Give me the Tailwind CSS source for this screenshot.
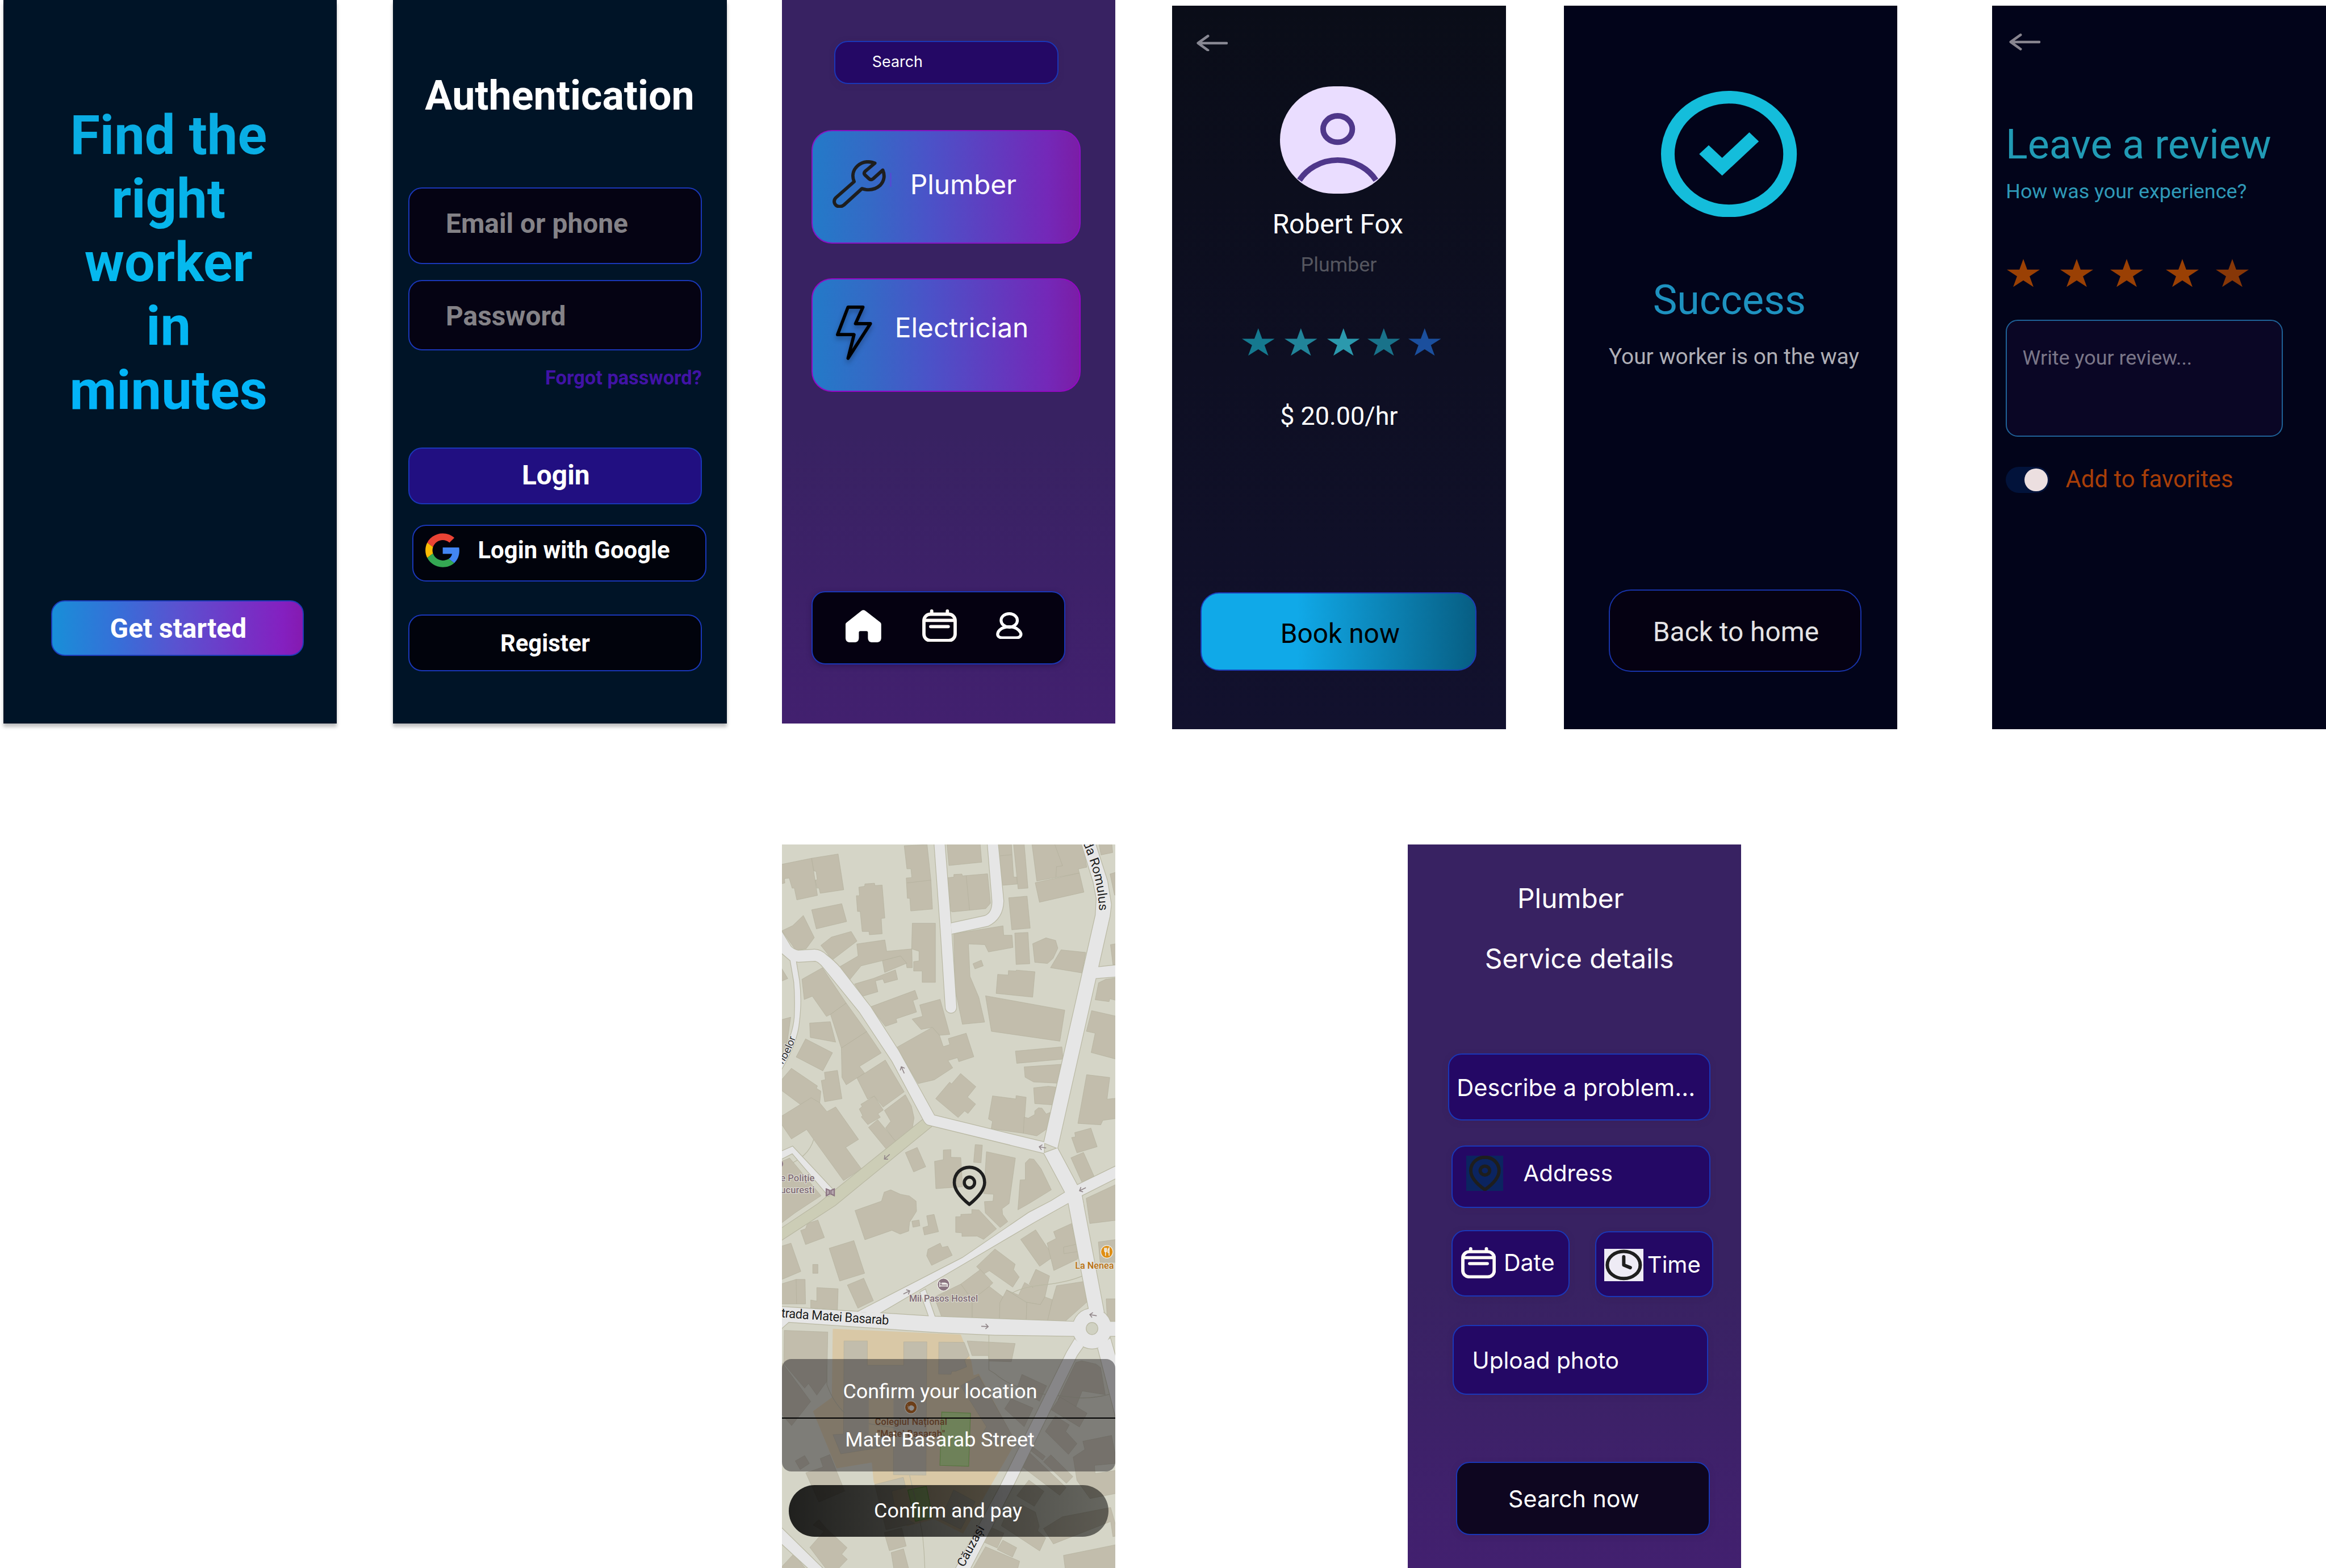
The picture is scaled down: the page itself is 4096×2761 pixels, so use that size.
<!DOCTYPE html>
<html lang="en">
<head>
<meta charset="utf-8">
<title>Find the right worker</title>
<script src="https://cdn.jsdelivr.net/npm/@tailwindcss/browser@4"></script>
</head>
<body class="bg-white overflow-hidden">
<svg class="hidden">
  <symbol id="star" viewBox="-95.1 -100 190.2 180.9" preserveAspectRatio="none"><polygon fill="currentColor" points="0,-100 22.5,-30.9 95.1,-30.9 36.3,11.8 58.8,80.9 0,38.2 -58.8,80.9 -36.3,11.8 -95.1,-30.9 -22.5,-30.9"/></symbol>
  <symbol id="back" viewBox="0 0 37 20"><path d="M35.5 10H2M13.5 1.6L1.8 10l11.7 8.4" fill="none" stroke="currentColor" stroke-width="3" stroke-linecap="round" stroke-linejoin="round"/></symbol>
  <symbol id="calendar" viewBox="637 106 245 232" preserveAspectRatio="none"><g fill="none" stroke="currentColor" stroke-width="23.5" stroke-linecap="round"><rect x="649" y="140" width="221" height="187" rx="46"/><path stroke-linecap="butt" d="M649 184H870"/><path d="M697 228H821M704 118V134M815 118V134"/></g></symbol>
</svg>

<div class="[zoom:1.49489] w-[2740px] h-[1847px] overflow-hidden font-['Roboto',sans-serif] text-white leading-none whitespace-nowrap">
<main class="flex items-start pl-[4px] h-[859px]">

  <!-- Welcome -->
  <section class="w-[393px] h-[852px] shrink-0 flex flex-col items-start bg-[#001427] shadow-[0_4px_4px_rgba(0,0,0,0.25)]">
    <h1 class="mt-[121.8px] ml-[74.500px] w-[240px] text-center whitespace-normal font-bold text-[64px] leading-[75px] bg-linear-to-b/srgb from-[#0aabe2] via-[#05b9ee] to-[#02b3fa] bg-clip-text text-transparent">Find the right worker in minutes</h1>
    <button class="mt-[210.2px] ml-[56px] w-[298px] h-[65.5px] flex items-start pl-[68.2px] pt-[16.9px] rounded-[16px] border-[1.34px] border-[#1d3bb8] bg-[linear-gradient(90deg,#188fd8,#366fd8_26%,#5a52d0_50%,#8420c0_92%,#851ab0)] font-bold text-[32px] leading-none">Get started</button>
  </section>

  <!-- Authentication -->
  <section class="ml-[66px] w-[393px] h-[852px] shrink-0 flex flex-col items-start bg-[#001427] font-bold shadow-[0_4px_4px_rgba(0,0,0,0.25)]">
    <h1 class="mt-[88.8px] ml-[37.6px] text-[48px] leading-none">Authentication</h1>
    <div class="mt-[84.2px] ml-[18px] w-[346px] h-[90px] pl-[42.8px] pt-[25.6px] rounded-[16px] border-[1.34px] border-[#1a37b8] bg-[#050313] text-[32px] leading-none text-[#848287]">Email or phone</div>
    <div class="mt-[19px] ml-[18px] w-[346px] h-[82.5px] pl-[42.8px] pt-[25.800px] rounded-[16px] border-[1.34px] border-[#1a37b8] bg-[#050313] text-[32px] leading-none text-[#848287]">Password</div>
    <a class="mt-[21px] ml-[179.2px] text-[23px] leading-none text-[#4113a6]">Forgot password?</a>
    <button class="mt-[70.4px] ml-[18px] w-[346px] h-[67px] flex items-start pl-[132.4px] pt-[16.500px] rounded-[16px] border-[1.34px] border-[#1a37b8] bg-[#210f81] text-[32px] leading-none">Login</button>
    <button class="mt-[24px] ml-[23px] w-[346px] h-[67px] flex items-start rounded-[16px] border-[1.34px] border-[#1a37b8] bg-[#01030c] text-[28px] leading-none">
      <svg class="mt-[9px] ml-[13.4px] w-[41px] h-[40px]" viewBox="2 2 44 44" preserveAspectRatio="none"><g transform="translate(2.1 2.1) scale(.913)"><path fill="#EA4335" d="M24 9.5c3.54 0 6.71 1.22 9.21 3.6l6.85-6.85C35.9 2.38 30.47 0 24 0 14.62 0 6.51 5.38 2.56 13.22l7.98 6.19C12.43 13.72 17.74 9.5 24 9.5z"/><path fill="#4285F4" d="M46.98 24.55c0-1.57-.15-3.09-.38-4.55H24v9.02h12.94c-.58 2.96-2.26 5.48-4.78 7.18l7.73 6c4.51-4.18 7.09-10.36 7.09-17.65z"/><path fill="#FBBC05" d="M10.53 28.59c-.48-1.45-.76-2.99-.76-4.59s.27-3.14.76-4.59l-7.98-6.19C.92 16.46 0 20.12 0 24c0 3.88.92 7.54 2.56 10.78l7.97-6.19z"/><path fill="#34A853" d="M24 48c6.48 0 11.93-2.13 15.89-5.81l-7.73-6c-2.15 1.45-4.92 2.3-8.16 2.3-6.26 0-11.57-4.22-13.47-9.91l-7.98 6.19C6.51 42.62 14.62 48 24 48z"/></g></svg>
      <span class="mt-[15.1px] ml-[21.2px]">Login with Google</span>
    </button>
    <button class="mt-[39px] ml-[18px] w-[346px] h-[67px] flex items-start pl-[107px] pt-[18.9px] rounded-[16px] border-[1.34px] border-[#1a37b8] bg-[#01030c] text-[28px] leading-none">Register</button>
  </section>

  <!-- Home -->
  <section class="ml-[65px] w-[393px] h-[852px] shrink-0 flex flex-col items-start bg-linear-to-b/srgb from-[#382262] from-60% to-[#42206f] font-['Inter',sans-serif]">
    <div class="mt-[48.3px] ml-[62px] w-[264px] h-[50.5px] pl-[43px] pt-[13.8px] rounded-[16px] border-[1.34px] border-[#1a37b8] bg-[#240865] text-[18px] leading-none shadow-[0_2px_6px_rgba(60,30,90,0.5)]">Search</div>
    <div class="mt-[54.2px] ml-[35px] w-[317.2px] h-[133.7px] flex items-start rounded-[24px] border-[1.34px] border-[#8a12c4] bg-[linear-gradient(90deg,#237ac8,#3569c6_22%,#4b52c8_44%,#7428b8_88%,#7b1da6)] text-[32px] leading-none">
      <svg class="mt-[34.1px] ml-[23.7px] w-[63px] h-[56.5px]" viewBox="180 107 366 328"><path fill="none" stroke="#1e1e1e" stroke-width="23" stroke-linejoin="round" d="M470 127L403 184Q391 196 403 209L430 234Q443 246 458 234L524 175C540 210 535 250 505 280C470 312 425 315 381 302L258 414C238 430 215 426 203 415C188 400 188 378 204 363L328 254C312 215 320 175 350 147C385 115 430 113 470 127Z"/></svg>
      <span class="mt-[49px] ml-[4.5px] w-[1.6px] h-[17px] rounded-full bg-[#5b45d6]/70"></span>
      <span class="mt-[47.8px] ml-[22px]">Plumber</span>
    </div>
    <div class="mt-[41px] ml-[35px] w-[317.2px] h-[133.7px] flex items-start rounded-[24px] border-[1.34px] border-[#9408c4] bg-[linear-gradient(90deg,#237ac8,#3569c6_22%,#4b52c8_44%,#7428b8_88%,#7b1da6)] text-[32px] leading-none">
      <svg class="mt-[30.7px] ml-[27.5px] w-[42.7px] h-[64.2px] overflow-visible drop-shadow-[0_4px_3px_rgba(0,0,0,0.3)]" viewBox="202 1103 248 373"><path fill="none" stroke="#000" stroke-width="22" stroke-linejoin="round" d="M285 1114H387L336 1227H438L285 1464L326 1302H213Z"/></svg>
      <span class="mt-[41.9px] ml-[26.6px]">Electrician</span>
    </div>
    <nav class="mt-[235.3px] ml-[35px] w-[299px] h-[86px] flex items-start rounded-[16px] border-[1.34px] border-[#1a37b8] bg-[#050111] shadow-[0_2px_6px_rgba(40,15,70,0.5)]">
      <svg class="mt-[20.7px] ml-[39px] w-[42px] h-[38.2px]" viewBox="96 113 252 229"><path fill="#fff" d="M103 202L208 119Q222 109 236 119L341 200Q348 206 348 214V314Q346 340 318 342H282Q254 340 254 312V270Q253 262 244 262H200Q191 262 190 270V314Q188 340 162 342H124Q98 340 96 314V214Q96 207 103 202Z"/></svg>
      <svg class="mt-[19.6px] ml-[48.2px] w-[40.8px] h-[38.6px] text-[#fffaf7]"><use href="#calendar"/></svg>
      <svg class="mt-[22.9px] ml-[46px] w-[31.2px] h-[32px]" viewBox="1158 126 187 192"><g fill="none" stroke="#fff" stroke-width="21"><ellipse cx="1251" cy="184" rx="57.5" ry="47.5"/><path d="M1216 234C1190 240 1169 262 1169 282C1169 298 1185 307 1202 307H1300C1318 307 1334 298 1334 282C1334 265 1310 240 1286 234C1264 228 1238 228 1216 234Z"/></g></svg>
    </nav>
  </section>

  <!-- Worker profile -->
  <section class="mt-[7px] ml-[67px] w-[393px] h-[852px] shrink-0 flex flex-col items-start bg-linear-to-b/srgb from-[#0a0d18] to-[#12112e]">
    <svg class="mt-[33.5px] ml-[28.4px] w-[37px] h-[20px] text-[#888893]"><use href="#back"/></svg>
    <div class="mt-[41.5px] ml-[127px] w-[136px] h-[126px] rounded-full overflow-hidden bg-[#eaddff]">
      <svg class="w-[136px] h-[126px]" viewBox="0 0 136 126"><g fill="none" stroke="#4f378a" stroke-width="6.6"><ellipse cx="68" cy="50.3" rx="17.2" ry="15.5"/><path d="M23 110.5A53 50 0 0 1 113 110.5"/></g></svg>
    </div>
    <h2 class="mt-[20.9px] ml-[117.9px] text-[32px] leading-none">Robert Fox</h2>
    <p class="mt-[19.4px] ml-[151.3px] text-[24px] leading-none text-[#55565f]">Plumber</p>
    <div class="mt-[62.4px] ml-[82px] flex">
      <svg class="w-[38.5px] h-[32.3px] text-[#15798f]"><use href="#star"/></svg>
      <svg class="ml-[11.8px] w-[38.5px] h-[32.3px] text-[#218499]"><use href="#star"/></svg>
      <svg class="ml-[11.4px] w-[38.5px] h-[32.3px] text-[#2b99ad]"><use href="#star"/></svg>
      <svg class="ml-[9.5px] w-[38.5px] h-[32.3px] text-[#19728a]"><use href="#star"/></svg>
      <svg class="ml-[9.5px] w-[38.5px] h-[32.3px] text-[#1b4f9d]"><use href="#star"/></svg>
    </div>
    <p class="mt-[56.6px] ml-[127px] text-[30px] leading-none">$ 20.00/hr</p>
    <button class="mt-[192.4px] ml-[33px] w-[325px] h-[92px] flex items-start pl-[93px] pt-[31.8px] rounded-[22px] border-[1.34px] border-[#1d3bb8] bg-linear-to-r/srgb from-[#10a9e8] from-35% to-[#075e83] text-[32px] leading-none text-black">Book now</button>
  </section>

  <!-- Success -->
  <section class="mt-[7px] ml-[68px] w-[393px] h-[852px] shrink-0 flex flex-col items-start bg-[#02041a]">
    <svg class="mt-[100px] ml-[115px] w-[160px] h-[148.8px]" viewBox="2 2 20 20" preserveAspectRatio="none"><circle cx="12" cy="12" r="9" fill="none" stroke="#14bddb" stroke-width="2"/><path fill="#14bddb" d="M11 15.43L7.62 12 9.02 10.6 11 12.6 15 8.57 16.4 10z"/></svg>
    <h2 class="mt-[74.1px] ml-[105.1px] text-[48px] leading-none text-[#1e92c0]">Success</h2>
    <p class="mt-[29.5px] ml-[53.1px] text-[26px] leading-none text-[#afafb6]">Your worker is on the way</p>
    <button class="mt-[261.3px] ml-[53px] w-[298px] h-[97px] flex items-start pl-[50.9px] pt-[33.2px] rounded-[26px] border-[1.34px] border-[#1833a8] bg-[#050112] text-[32px] leading-none text-[#e4e3e5]">Back to home</button>
  </section>

  <!-- Review -->
  <section class="mt-[7px] ml-[112px] w-[393px] h-[852px] shrink-0 flex flex-col items-start bg-[#02041a]">
    <svg class="mt-[32.4px] ml-[19.6px] w-[37px] h-[20px] text-[#88858f]"><use href="#back"/></svg>
    <h2 class="mt-[86.8px] ml-[15.8px] text-[48px] leading-none text-[#219bb5]">Leave a review</h2>
    <p class="mt-[19.6px] ml-[16px] text-[24px] leading-none text-[#2f9ab8]">How was your experience?</p>
    <div class="mt-[67.2px] ml-[17.1px] flex text-[#9a4004]">
      <svg class="w-[38.8px] h-[33px]"><use href="#star"/></svg>
      <svg class="ml-[24.1px] w-[38.8px] h-[33px]"><use href="#star"/></svg>
      <svg class="ml-[20.2px] w-[38.8px] h-[33px]"><use href="#star"/></svg>
      <svg class="ml-[26.3px] w-[38.8px] h-[33px]"><use href="#star"/></svg>
      <svg class="ml-[20.1px] w-[38.8px] h-[33px] text-[#873707]"><use href="#star"/></svg>
    </div>
    <div class="mt-[38.7px] ml-[16px] w-[326px] h-[138px] pl-[18.2px] pt-[31.8px] rounded-[14px] border-[1.34px] border-[#1f6298] bg-[#0a0625] text-[24px] leading-none text-[#7a7688]">Write your review...</div>
    <div class="mt-[35.3px] ml-[16px] flex items-start">
      <div class="w-[51px] h-[31px] pt-[2px] pl-[22px] rounded-full bg-[#02133b]"><div class="size-[27px] rounded-full bg-[#ecdfe0]"></div></div>
      <span class="mt-[0.8px] ml-[19.4px] text-[28px] leading-none text-[#a83e08]">Add to favorites</span>
    </div>
  </section>
</main>

<div class="mt-[136px] pl-[921px] flex items-start">

  <!-- Location -->
  <section class="relative w-[393px] h-[852px] shrink-0 overflow-hidden bg-[#d5d5c7]">
    <svg class="absolute inset-0 w-[393px] h-[852px] font-['Roboto',sans-serif]" viewBox="0 0 393 852">
      <defs>
        <g id="roadsNorth">
          <path d="M720 30L766 30L794 372L818 725C818 760 770 758 770 725L749 412Z"/>
          <path d="M957 30L1003 30L1028 275Q1026 350 960 381L797 415L794 370L945 339Q980 325 978 275Z"/>
          <path d="M1375 30L1436 30L1490 190L1507 290L1501 340L1268 1325L1208 1302L1438 335L1442 265L1428 195Z"/>
          <path d="M1440 557L1540 547L1540 596L1430 604Z"/>
          <path d="M30 388L82 470Q98 484 115 486L187 482Q215 483 240 505Q275 530 300 558L436 725L560 910L720 1186L1210 1300L1208 1346L690 1225Q680 1220 672 1205L533 957L388 748L226 557Q205 533 190 530L115 534L78 527L30 488Z"/>
          <path d="M78 520L103 524L119 615Q130 700 118 790Q110 880 30 1005L30 950Q92 850 98 770Q102 690 96 620Z"/>
          <path d="M30 1343L89 1318L272 1505L250 1528L88 1347L30 1376Z"/>
          <path d="M1208 1346L1268 1325L1356 1482L1540 1396L1540 1447L1376 1526L1385 1570L1316 1558L1302 1513Z"/>
        </g>
        <g id="roadsSouth">
          <path d="M1302 -37L1376 -24L1475 475L1408 465L1317 8Z"/>
          <path d="M1302 -37L1376 -24L1317 8L1165 90L865 260L475 480L380 473L845 243L1140 50L1240 0Z"/>
          <path d="M30 452L380 473L720 494L1345 516L1345 577L990 572L740 561L72 517L30 553Z"/>
          <path d="M657 390L680 378L723 496L697 496Z"/>
          <circle cx="1422" cy="545" r="86"/>
          <path d="M1490 516H1540V577H1490Z"/>
          <path d="M1345 590L1310 645L1010 1225L810 1580L875 1580L1075 1210L1355 660L1383 622Z"/>
          <path d="M1448 628L1503 586L1540 710L1540 970Z"/>
          <path d="M30 1388L228 1575L165 1575L30 1456Z"/>
        </g>
        <g id="dir"><path d="M-15 0H16M4 -11L16 0L4 11" fill="none" stroke="#918689" stroke-width="4"/></g>
      </defs>
      <g id="buildings" fill="#c2bdac" stroke="#b0ac99" stroke-width="1.5">
        <g transform="translate(-11.1 -9.9) scale(.26467 .27742)">
          <polygon points="30,122 174,94 200,252 108,271 97,221 87,221 74,178 53,181 55,199 30,205"/>
          <polygon points="174,94 292,76 317,228 212,243 207,221 198,221 190,187 199,185 194,150 184,148"/>
          <polygon points="174,313 308,287 330,363 195,394"/>
          <polygon points="42,402 90,380 137,337 186,431 150,478 103,484"/>
          <polygon points="384,217 410,213 411,203 454,200 456,210 488,208 500,348 484,350 488,415 431,419 429,405 399,405 390,320 378,320 373,253 387,253"/>
          <polygon points="586,41 688,36 705,187 712,310 615,318 611,264 600,264 595,178 620,176 616,139 598,139"/>
          <path d="M598 199L705 187"/>
          <polygon points="776,30 924,30 931,111 785,125"/>
          <polygon points="780,177 807,174 807,163 843,161 845,169 957,160 970,285 949,308 800,322 792,318"/>
          <path d="M862 169L877 315"/>
          <polygon points="1003,30 1063,30 1073,174 1088,174 1089,204 1022,209"/>
          <path d="M1012 84L1064 79"/>
          <polygon points="1072,30 1120,30 1137,221 1093,224"/>
          <polygon points="1154,30 1380,30 1399,132 1361,140 1366,157 1176,191"/>
          <path d="M1254 30L1291 126L1264 130L1261 176"/>
          <polygon points="1169,198 1366,157 1386,238 1188,281"/>
          <polygon points="1051,262 1133,255 1147,391 1065,398"/>
          <polygon points="1452,30 1510,30 1514,70 1462,80"/>
          <polygon points="1502,161 1540,150 1540,254 1522,250"/>
          <polygon points="215,464 262,429 350,405 376,446 266,526"/>
          <polygon points="375,458 500,441 508,489 620,479 622,559 598,559 595,540 570,509 489,529 394,551 343,611 297,556 381,509"/>
          <polygon points="489,529 570,509 597,540 499,579"/>
          <polygon points="622,370 725,370 725,621 666,621 666,573 628,573 628,533 652,530 652,489 619,479"/>
          <polygon points="365,628 450,604 547,568 557,609 498,624 491,607 458,615 469,661 401,680"/>
          <polygon points="436,725 634,655 647,691 625,698 641,747 550,776 554,791 502,808"/>
          <polygon points="655,717 746,693 789,842 743,846 711,812 661,821 621,777 668,765"/>
          <polygon points="806,415 1026,381 1029,421 1066,421 1070,473 961,492 945,461 872,458 879,596 918,684 944,790 845,799 813,650"/>
          <polygon points="1078,412 1137,409 1145,542 1084,545"/>
          <polygon points="1158,457 1217,432 1260,443 1270,476 1249,519 1224,541 1167,536"/>
          <polygon points="1284,483 1394,494 1377,581 1237,559"/>
          <polygon points="892,542 929,527 938,551 901,564"/>
          <polygon points="1002,587 1049,590 1050,571 1083,573 1085,569 1168,576 1158,684 995,668"/>
          <polygon points="948,678 1301,739 1279,871 974,829"/>
          <polygon points="1504,461 1540,455 1540,546 1515,546"/>
          <polygon points="30,545 68,605 30,620"/>
          <polygon points="131,608 222,559 328,709 258,757 240,766 177,680 141,694"/>
          <polygon points="258,757 328,709 419,830 306,900"/>
          <polygon points="306,900 419,830 484,921 387,978 410,1006 328,1056 309,1025"/>
          <polygon points="165,794 257,788 281,875 168,855"/>
          <polygon points="30,782 81,769 66,870 30,945"/>
          <polygon points="147,861 267,920 224,997 105,938"/>
          <polygon points="553,897 711,812 743,846 760,894 789,885 782,860 862,837 896,937 829,958 823,941 781,953 802,984 720,1035 648,1051"/>
          <polygon points="84,986 200,1061 195,1071 215,1083 210,1134 123,1139 30,1073 30,1046"/>
          <polygon points="231,1003 289,995 309,1115 232,1128 217,1038 235,1034"/>
          <polygon points="376,1028 502,951 586,1086 492,1151 453,1104 423,1117"/>
          <polygon points="386,1159 399,1148 393,1139 453,1104 493,1163 469,1179 480,1194 424,1225 395,1192 401,1187"/>
          <polygon points="30,1195 172,1111 210,1132 242,1170 281,1150 383,1288 326,1322 396,1413 316,1463 183,1288 152,1246 84,1286 30,1210"/>
          <polygon points="498,1165 591,1098 618,1146 630,1197 623,1238 547,1298 503,1239 526,1211"/>
          <polygon points="427,1237 468,1204 549,1297 508,1331"/>
          <polygon points="726,1115 788,1045 797,1052 837,1008 905,1064 868,1108 904,1138 870,1178 855,1167 826,1195"/>
          <polygon points="1081,913 1288,895 1293,947 1087,965"/>
          <polygon points="1120,980 1285,969 1267,1049 1162,1044 1124,1024"/>
          <polygon points="1162,1069 1228,1062 1262,1066 1245,1141 1167,1136"/>
          <polygon points="979,1103 1083,1116 1084,1102 1129,1109 1117,1262 973,1243 979,1211 961,1201"/>
          <polygon points="1120,1193 1138,1198 1167,1182 1167,1167 1183,1154 1199,1155 1218,1180 1236,1173 1222,1243 1176,1273 1117,1262"/>
          <polygon points="1451,623 1483,608 1540,601 1540,700 1501,691 1498,703 1436,695"/>
          <polygon points="1420,741 1540,767 1540,950 1418,919 1436,837 1397,829"/>
          <polygon points="1398,1013 1501,1025 1489,1117 1540,1112 1540,1198 1470,1207 1461,1226 1359,1220"/>
          <polygon points="1345,1259 1417,1240 1445,1319 1355,1345 1331,1280 1348,1277"/>
          <polygon points="1328,1366 1384,1343 1431,1444 1377,1470"/>
          <polygon points="591,1344 644,1322 682,1404 628,1426"/>
          <polygon points="721,1381 760,1374 760,1333 794,1331 794,1364 838,1365 846,1489 727,1497"/>
          <polygon points="902,1310 934,1312 928,1387 895,1385"/>
          <polygon points="952,1340 1081,1367 1053,1560 1022,1582 1024,1606 1047,1637 1013,1662 947,1600 943,1552 981,1550 984,1521 940,1518"/>
          <polygon points="1125,1388 1143,1370 1163,1372 1195,1412 1241,1502 1142,1560 1092,1587 1102,1460 1125,1459"/>
          <polygon points="1396,1538 1540,1474 1540,1630 1412,1645"/>
          <polygon points="30,1385 76,1367 216,1527 100,1600 30,1650"/>
          <polygon points="497,1512 526,1502 570,1521 609,1528 639,1550 641,1593 610,1640 606,1677 568,1690 531,1674 411,1714 367,1590 485,1550"/>
        </g>
        <g transform="translate(-11.1 420) scale(.26467 .27551)">
          <polygon fill="#d9c8a6" stroke="none" points="268,546 838,571 868,645 885,685 895,745 918,738 1065,1000 1065,1060 848,1422 720,1360 600,1390 490,1300 450,1200 442,1118 285,1143 180,899 264,840"/>
          <polygon points="125,126 147,118 155,96 202,81 231,156 147,186"/>
          <polygon points="30,196 82,180 126,301 30,340"/>
          <polygon points="252,202 362,169 410,309 299,342"/>
          <polygon points="179,271 202,271 202,309 179,309"/>
          <polygon points="30,357 105,335 145,335 147,440 30,440"/>
          <path d="M105 335L107 440"/>
          <polygon points="333,359 406,330 449,426 380,458"/>
          <polygon points="197,370 292,375 289,467 170,457 170,423 197,428"/>
          <polygon points="620,86 652,81 656,106 625,112"/>
          <polygon points="686,63 719,57 739,131 676,145 669,113 694,106"/>
          <polygon points="692,206 746,180 755,198 780,193 800,232 708,275 686,234"/>
          <polygon points="815,67 838,67 838,57 887,55 887,36 919,38 997,119 939,164 911,150 843,151 843,136 815,134"/>
          <polygon points="1104,164 1171,123 1250,238 1189,279"/>
          <polygon points="1251,131 1331,96 1360,220 1358,248 1252,297 1222,180 1262,160"/>
          <polygon points="1295,197 1352,185 1359,216 1297,225"/>
          <polygon points="908,280 990,205 1080,270 1073,293 1098,325 1069,368 965,298 940,312"/>
          <polygon points="720,410 838,355 889,422 889,503 752,494"/>
          <polygon points="838,355 925,293 981,350 965,365 889,422"/>
          <polygon points="965,365 1026,410 1012,435 1010,507 889,503 889,422"/>
          <polygon points="1042,380 1132,435 1129,511 1010,507 1012,435"/>
          <polygon points="1042,380 1095,402 1122,348 1160,370 1142,355 1172,292 1233,320 1212,412 1192,443 1132,433"/>
          <polygon points="1132,433 1192,443 1212,410 1246,422 1224,514 1129,511"/>
          <polygon points="1264,362 1385,344 1399,432 1303,514 1224,512 1246,422"/>
          <polygon points="1450,175 1540,163 1540,262 1458,262"/>
          <polygon points="1485,418 1540,418 1540,515 1490,515"/>
          <polygon points="52,553 246,560 242,770 197,830 160,780 143,800 50,695"/>
          <polygon points="740,603 853,604 876,661 855,680 864,709 815,728 798,728 794,741 739,740"/>
          <polygon points="866,598 1080,609 1063,687 963,684 960,661 888,661"/>
          <polygon points="318,598 422,598 422,702 584,702 584,602 687,602 683,1172 538,1170 538,1045 304,1081 269,999 316,996"/>
          <path fill="#d9c8a6" stroke="none" d="M428 845H538V1000H428Z"/>
          <polygon points="837,790 918,748 1065,1000 1010,1035 975,1030 940,985 952,965"/>
          <polygon points="1110,741 1220,790 1188,856 1088,800"/>
          <polygon points="1062,845 1160,885 1120,965 1033,888"/>
          <polygon points="1350,690 1376,683 1440,697 1460,712 1481,828 1378,812 1340,905 1270,850"/>
          <polygon points="1280,838 1400,907 1366,966 1241,893"/>
          <polygon points="1259,918 1321,957 1305,985 1355,1037 1317,1083 1214,985"/>
          <polygon points="1381,1027 1509,1002 1526,1085 1526,1122 1433,1130 1436,1165 1540,1150 1540,1248 1413,1272 1355,1195 1338,1095 1390,1062"/>
          <polygon points="30,675 170,857 85,960 30,900"/>
          <polygon points="101,1111 143,1088 164,1122 123,1148"/>
          <polygon points="148,1162 225,1137 212,1101 255,1084 321,1240 206,1287"/>
          <polygon points="1142,1074 1307,1225 1278,1258 1110,1135"/>
          <polygon points="1239,1085 1337,1178 1308,1207 1206,1115"/>
          <polygon points="1160,1052 1214,1092 1202,1108 1150,1068"/>
          <polygon points="1141,1193 1208,1241 1165,1305 1087,1260"/>
          <polygon points="455,1212 582,1181 593,1225 530,1240 548,1330 632,1378 505,1405"/>
          <polygon points="806,1235 902,1285 838,1403 748,1360"/>
          <polygon points="1110,1300 1170,1330 1187,1390 1180,1410 1216,1440 1189,1496 1018,1388 1040,1340"/>
          <polygon points="1206,1400 1290,1350 1505,1310 1540,1430 1515,1435 1505,1370 1250,1466"/>
          <polygon points="972,1395 1030,1420 1000,1483 940,1458"/>
          <polygon points="1025,1450 1087,1482 1068,1522 1000,1490"/>
          <polygon points="948,1478 1100,1540 1090,1575 890,1575"/>
          <polygon points="1295,1515 1540,1467 1540,1575 1303,1575"/>
          <polygon points="206,1362 240,1400 332,1482 308,1510 333,1532 290,1575 240,1575 166,1481 229,1412 180,1385"/>
          <polygon points="497,1418 575,1398 595,1475 520,1495"/>
          <polygon points="528,1503 583,1487 607,1575 540,1575"/>
          <polygon points="30,1575 95,1508 150,1575"/>
          <g fill="#b4dc88" stroke="#86c455" stroke-width="3"><polygon points="753,902 881,907 873,1134 745,1130"/><polygon points="602,1236 685,1220 712,1353 636,1369"/></g>
          <g fill="none" stroke="#b9b8a3" stroke-width="3">
            <path d="M242 700V785Q270 860 320 905M428 952L550 970Q575 980 583 1020M610 1172Q650 1330 668 1430Q676 1500 678 1575M963 570V722L990 738Q1040 780 1110 800L1200 825L1370 842Q1440 842 1500 826M1066 393Q1120 365 1220 357Q1320 345 1380 320"/>
          </g>
        </g>
      </g>
      <g transform="translate(-11.1 -9.9) scale(.26467 .27742)">
        <path d="M183 1288Q165 1350 92 1386" fill="none" stroke="#b9b8a3" stroke-width="3"/>
        <path d="M672 1200L710 1232L280 1568L30 1723L30 1670L200 1562Z" fill="#cccdb6" stroke="#b9b8a3" stroke-width="3"/>
      </g>
      <g stroke="#b9b8a3" stroke-width="6">
        <g transform="translate(-11.1 -9.9) scale(.26467 .27742)"><use href="#roadsNorth"/></g>
        <g transform="translate(-11.1 420) scale(.26467 .27551)"><use href="#roadsSouth"/></g>
      </g>
      <g fill="#e6e6e6">
        <g transform="translate(-11.1 -9.9) scale(.26467 .27742)"><use href="#roadsNorth"/></g>
        <g transform="translate(-11.1 420) scale(.26467 .27551)"><use href="#roadsSouth"/></g>
      </g>
      <g transform="translate(-11.1 -9.9) scale(.26467 .27742)">
        <use href="#dir" transform="translate(580 994) rotate(-115)"/>
        <use href="#dir" transform="translate(510 1361) rotate(140)"/>
        <use href="#dir" transform="translate(1203 1322) rotate(190)"/>
        <use href="#dir" transform="translate(1381 1499) rotate(155)"/>
        <path id="romulus" d="M1355 -40L1410 100Q1448 200 1454 318" fill="none"/>
        <text font-size="57" fill="#1f1f1f" stroke="#f2f2f2" stroke-width="4" paint-order="stroke" text-anchor="end"><textPath href="#romulus" startOffset="100%">ada Romulus</textPath></text>
        <path id="porumbelor" d="M-40 1080Q70 960 103 856" fill="none"/>
        <text font-size="46" fill="#333" stroke="#f2f2f2" stroke-width="4" paint-order="stroke" text-anchor="end"><textPath href="#porumbelor" startOffset="100%">mbelor</textPath></text>
        <g font-size="42" fill="#7f6b75" stroke="#e4e3dc" stroke-width="5" paint-order="stroke" font-weight="500"><text x="187" y="1466" text-anchor="end">e Poliție</text><text x="187" y="1516" text-anchor="end">ucuresti</text></g>
        <circle cx="30" cy="1392" r="17" fill="#8a7380"/>
        <path d="M239 1498L254 1504V1520L239 1527ZM275 1498L260 1504V1520L275 1527Z" fill="#b5a6ad" stroke="#8a7380" stroke-width="5"/>
        <g fill="none" stroke="#1e1e1e" stroke-width="14"><path stroke-linejoin="round" d="M876 1564C845 1540 809 1505 809 1471C809 1432 840 1406 876 1406C914 1406 944 1434 944 1471C944 1505 907 1540 876 1564Z"/><circle cx="876.500" cy="1471" r="23"/></g>
      </g>
      <g transform="translate(-11.1 420) scale(.26467 .27551)">
        <circle cx="1422" cy="545" r="26" fill="#d0d1c2" stroke="#b9b8a3" stroke-width="3"/>
        <use href="#dir" transform="translate(596 391) rotate(-25)"/>
        <use href="#dir" transform="translate(944 536) rotate(2)"/>
        <use href="#dir" transform="translate(1428 488) rotate(190)"/>
        <text transform="translate(517 529) rotate(3.800)" text-anchor="end" font-size="56" textLength="480" fill="#1a1a1a" stroke="#f2f2f2" stroke-width="4" paint-order="stroke">trada Matei Basarab</text>
        <text transform="translate(944 1400) rotate(-61)" text-anchor="end" font-size="54" fill="#1a1a1a" stroke="#e6e6e6" stroke-width="3" paint-order="stroke">da Căuzași</text>
        <g font-size="41" font-weight="500" stroke="#e4e3dc" stroke-width="5" paint-order="stroke">
          <text x="608" y="430" textLength="306" fill="#7f6b75">Mil Pasos Hostel</text>
          <text x="1347" y="290" textLength="172" fill="#b9700f">La Nenea</text>
          <text x="456" y="957" textLength="321" fill="#8a4c20" stroke="none">Colegiul Național</text>
          <text x="466" y="1007" textLength="302" fill="#8a4c20" stroke="none">"Matei Basarab"</text>
        </g>
        <g stroke="#f0efe8" stroke-width="3"><circle cx="761" cy="357" r="27" fill="#8a7380"/><circle cx="1488" cy="217" r="27" fill="#e08e12"/><circle cx="616" cy="882" r="27" fill="#b05606"/></g>
        <path d="M744 346V367M744 363H778M778 367V355H755V351H768Q776 352 778 357M748 352H751" fill="none" stroke="#efeeea" stroke-width="4"/>
        <path d="M1478 200V212Q1478 217 1482 217Q1487 217 1487 212V200M1482 200V234M1498 234V200Q1492 206 1493 220H1498" fill="none" stroke="#efeeea" stroke-width="4"/>
        <path d="M611 877Q618 873 624 877Q631 880 628 888Q624 896 619 894Q612 896 609 887Q607 879 611 877ZM603 875L605 891M601 869V871" fill="#efeeea" stroke="#efeeea" stroke-width="3"/>
      </g>
    </svg>
    <div class="relative mt-[606px] w-[393px] h-[132px] rounded-[11px] bg-[#282629]/50 text-[24px] leading-none">
      <p class="h-[70px] pt-[26.3px] pl-[72px] border-b-[1.34px] border-black">Confirm your location</p>
      <p class="pt-[13.4px] pl-[74.5px]">Matei Basarab Street</p>
    </div>
    <button class="relative mt-[16px] ml-[8px] w-[377px] h-[61px] flex items-start pl-[100.6px] pt-[19.3px] rounded-[30.5px] bg-linear-to-r/srgb from-black/85 to-black/52 text-[24px] leading-none">Confirm and pay</button>
  </section>

  <!-- Service details -->
  <section class="ml-[344px] w-[393px] h-[852px] shrink-0 flex flex-col items-start bg-linear-to-b/srgb from-[#382262] from-60% to-[#42206f] font-['Inter',sans-serif]">
    <h2 class="mt-[48.1px] ml-[129.5px] text-[32px] leading-none">Plumber</h2>
    <h3 class="mt-[39px] ml-[91.2px] text-[32px] leading-none">Service details</h3>
    <div class="mt-[94.9px] ml-[48px] w-[309px] h-[78.6px] pl-[8.7px] pt-[25.2px] rounded-[16px] border-[1.34px] border-[#1a37b8] bg-[#240865] text-[27.800px] leading-none shadow-[0_2px_6px_rgba(60,30,90,0.5)]">Describe a problem...</div>
    <div class="mt-[29.4px] ml-[52px] w-[305px] h-[74px] flex items-start rounded-[16px] border-[1.34px] border-[#1a37b8] bg-[#240865] text-[26.9px] leading-none shadow-[0_2px_6px_rgba(60,30,90,0.5)]">
      <svg class="mt-[10.8px] ml-[15.6px] w-[44px] h-[42px] bg-[#0b2460]" viewBox="162 126 264 252"><g fill="none" stroke="#1e1e1e" stroke-width="23.500"><path stroke-linejoin="round" d="M294 366C250 335 194 285 194 231C194 176 240 137 294 137C350 137 394 178 394 231C394 285 338 335 294 366Z"/><ellipse cx="294" cy="231" rx="33.500" ry="31.500"/></g></svg>
      <span class="mt-[18.3px] ml-[23.6px]">Address</span>
    </div>
    <div class="mt-[26px] ml-[52px] flex items-start">
      <div class="w-[139px] h-[78px] flex items-start rounded-[16px] border-[1.34px] border-[#1a37b8] bg-[#240865] text-[27.5px] leading-none shadow-[0_2px_6px_rgba(60,30,90,0.5)]">
        <svg class="mt-[18.5px] ml-[9.6px] w-[41px] h-[36.8px] text-[#fffaf7]"><use href="#calendar"/></svg>
        <span class="mt-[23.6px] ml-[9.4px]">Date</span>
      </div>
      <div class="mt-[1px] ml-[30px] w-[139px] h-[78px] flex items-start rounded-[16px] border-[1.34px] border-[#1a37b8] bg-[#240865] text-[26.800px] leading-none shadow-[0_2px_6px_rgba(60,30,90,0.5)]">
        <svg class="mt-[19.7px] ml-[9.7px] w-[46px] h-[38px] bg-[#eeebf5]" viewBox="1140 786 276 228"><g fill="none" stroke="#1e1e1e" stroke-width="24" stroke-linecap="round" stroke-linejoin="round"><ellipse cx="1278" cy="900" rx="116.500" ry="96"/><path d="M1278 842V900L1324 919"/></g></svg>
        <span class="mt-[25px] ml-[4.5px]">Time</span>
      </div>
    </div>
    <div class="mt-[33px] ml-[53px] w-[301px] h-[82px] pl-[22px] pt-[27px] rounded-[16px] border-[1.34px] border-[#1a37b8] bg-[#240865] text-[27.1px] leading-none shadow-[0_2px_6px_rgba(60,30,90,0.5)]">Upload photo</div>
    <button class="mt-[79px] ml-[57px] w-[299px] h-[86px] flex items-start pl-[60.4px] pt-[28.6px] rounded-[16px] border-[1.34px] border-[#1a37b8] bg-[#0e0620] text-[27.6px] leading-none shadow-[0_2px_6px_rgba(60,30,90,0.5)]">Search now</button>
  </section>
</div>
</div>
</body>
</html>
